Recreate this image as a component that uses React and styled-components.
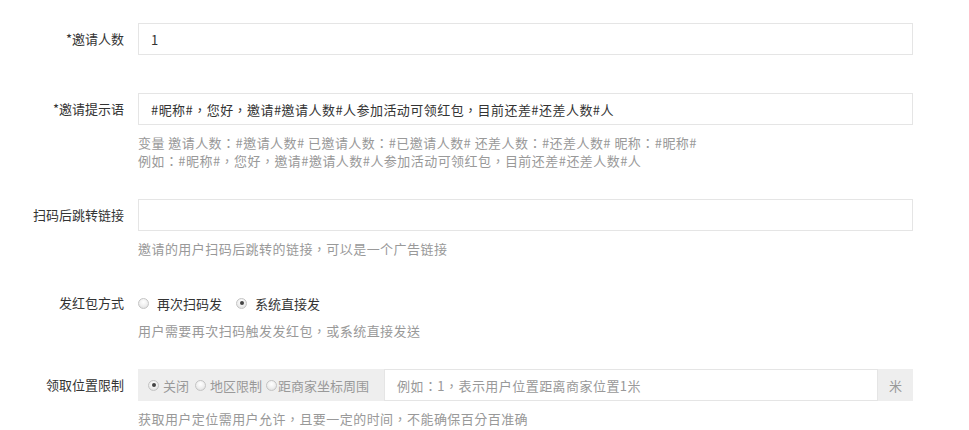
import React from "react";
import styled, { createGlobalStyle } from "styled-components";

const Global = createGlobalStyle`
  html, body { margin: 0; padding: 0; background: #fff; }
  body {
    font-family: "Microsoft YaHei", "Noto Sans CJK SC", "Noto Sans", sans-serif;
    font-size: 13px;
    color: #333;
    text-spacing-trim: space-all;
  }
`;

const Form = styled.div`
  padding: 23px 56px 0 0;
  width: 969px;
  box-sizing: border-box;
`;

const Group = styled.div`
  display: grid;
  grid-template-columns: 124px 1fr;
  column-gap: 14px;
  margin-bottom: ${(p) => p.$mb ?? 29}px;
`;

const Label = styled.label`
  text-align: right;
  line-height: ${(p) => p.$lh ?? 32}px;
  padding-top: ${(p) => p.$pt ?? 0}px;
  color: #333;
  white-space: nowrap;
`;

const Control = styled.div`
  display: flex;
  flex-direction: column;
  min-width: 0;
`;

const Input = styled.div`
  height: 32px;
  box-sizing: border-box;
  border: 1px solid #e5e5e5;
  padding: 0 12px;
  display: flex;
  align-items: center;
  color: ${(p) => (p.$placeholder ? "#999" : "#333")};
  background: #fff;
  white-space: nowrap;
  overflow: hidden;
  flex: ${(p) => (p.$grow ? 1 : "none")};
  font-family: "Noto Sans CJK TC", "Noto Sans CJK SC", sans-serif;
  letter-spacing: 0.45px;
`;

const Help = styled.div`
  margin-top: 9px;
  color: #999;
  line-height: 18px;
  white-space: nowrap;
  font-family: "Noto Sans CJK TC", "Noto Sans CJK SC", sans-serif;
  letter-spacing: 0.45px;
`;

const RadioRow = styled.div`
  display: flex;
  align-items: center;
  height: 20px;
  padding-top: 6px;
`;

const RadioItem = styled.span`
  display: inline-flex;
  align-items: center;
  margin-right: ${(p) => p.$mr ?? 0}px;
  color: ${(p) => (p.$muted ? "#999" : "#333")};
`;

const Dot = styled.span`
  width: 11px;
  height: 11px;
  box-sizing: border-box;
  border-radius: 50%;
  border: 1px solid #c4c4c4;
  background: radial-gradient(circle at 50% 35%, #fff 0%, #eee 55%, #d8d8d8 100%);
  margin-right: ${(p) => p.$gap ?? 8}px;
  margin-left: ${(p) => p.$ml ?? 0}px;
  position: relative;
  flex: none;
  &::after {
    content: "";
    display: ${(p) => (p.$checked ? "block" : "none")};
    position: absolute;
    left: 50%;
    top: 50%;
    width: 4px;
    height: 4px;
    margin: -2px 0 0 -2px;
    border-radius: 50%;
    background: #444;
  }
`;

const InputGroup = styled.div`
  display: flex;
  height: 32px;
`;

const Addon = styled.div`
  background: #eee;
  display: flex;
  align-items: center;
  justify-content: ${(p) => (p.$center ? "center" : "flex-start")};
  width: ${(p) => p.$w}px;
  padding: ${(p) => (p.$center ? "0" : "0 0 0 10px")};
  box-sizing: border-box;
  color: #999;
  flex: none;
  white-space: nowrap;
`;

export default function App() {
  return (
    <>
      <Global />
      <Form>
        <Group $mb={38}>
          <Label>*邀请人数</Label>
          <Control>
            <Input>1</Input>
          </Control>
        </Group>

        <Group>
          <Label>*邀请提示语</Label>
          <Control>
            <Input>#昵称#，您好，邀请#邀请人数#人参加活动可领红包，目前还差#还差人数#人</Input>
            <Help>
              变量 邀请人数：#邀请人数# 已邀请人数：#已邀请人数# 还差人数：#还差人数# 昵称：#昵称#
              <br />
              例如：#昵称#，您好，邀请#邀请人数#人参加活动可领红包，目前还差#还差人数#人
            </Help>
          </Control>
        </Group>

        <Group>
          <Label>扫码后跳转链接</Label>
          <Control>
            <Input />
            <Help>邀请的用户扫码后跳转的链接，可以是一个广告链接</Help>
          </Control>
        </Group>

        <Group>
          <Label $lh={20} $pt={6}>发红包方式</Label>
          <Control>
            <RadioRow>
              <RadioItem $mr={14}>
                <Dot $ml={0} $gap={8} />
                再次扫码发
              </RadioItem>
              <RadioItem>
                <Dot $gap={8} $checked />
                系统直接发
              </RadioItem>
            </RadioRow>
            <Help>用户需要再次扫码触发发红包，或系统直接发送</Help>
          </Control>
        </Group>

        <Group $mb={0}>
          <Label>领取位置限制</Label>
          <Control>
            <InputGroup>
              <Addon $w={246}>
                <RadioItem $muted $mr={6}>
                  <Dot $checked $gap={4} />
                  关闭
                </RadioItem>
                <RadioItem $muted $mr={4}>
                  <Dot $gap={4} />
                  地区限制
                </RadioItem>
                <RadioItem $muted>
                  <Dot $gap={1} />
                  距商家坐标周围
                </RadioItem>
              </Addon>
              <Input $grow $placeholder>
                例如：1，表示用户位置距离商家位置1米
              </Input>
              <Addon $w={35} $center>米</Addon>
            </InputGroup>
            <Help>获取用户定位需用户允许，且要一定的时间，不能确保百分百准确</Help>
          </Control>
        </Group>
      </Form>
    </>
  );
}
